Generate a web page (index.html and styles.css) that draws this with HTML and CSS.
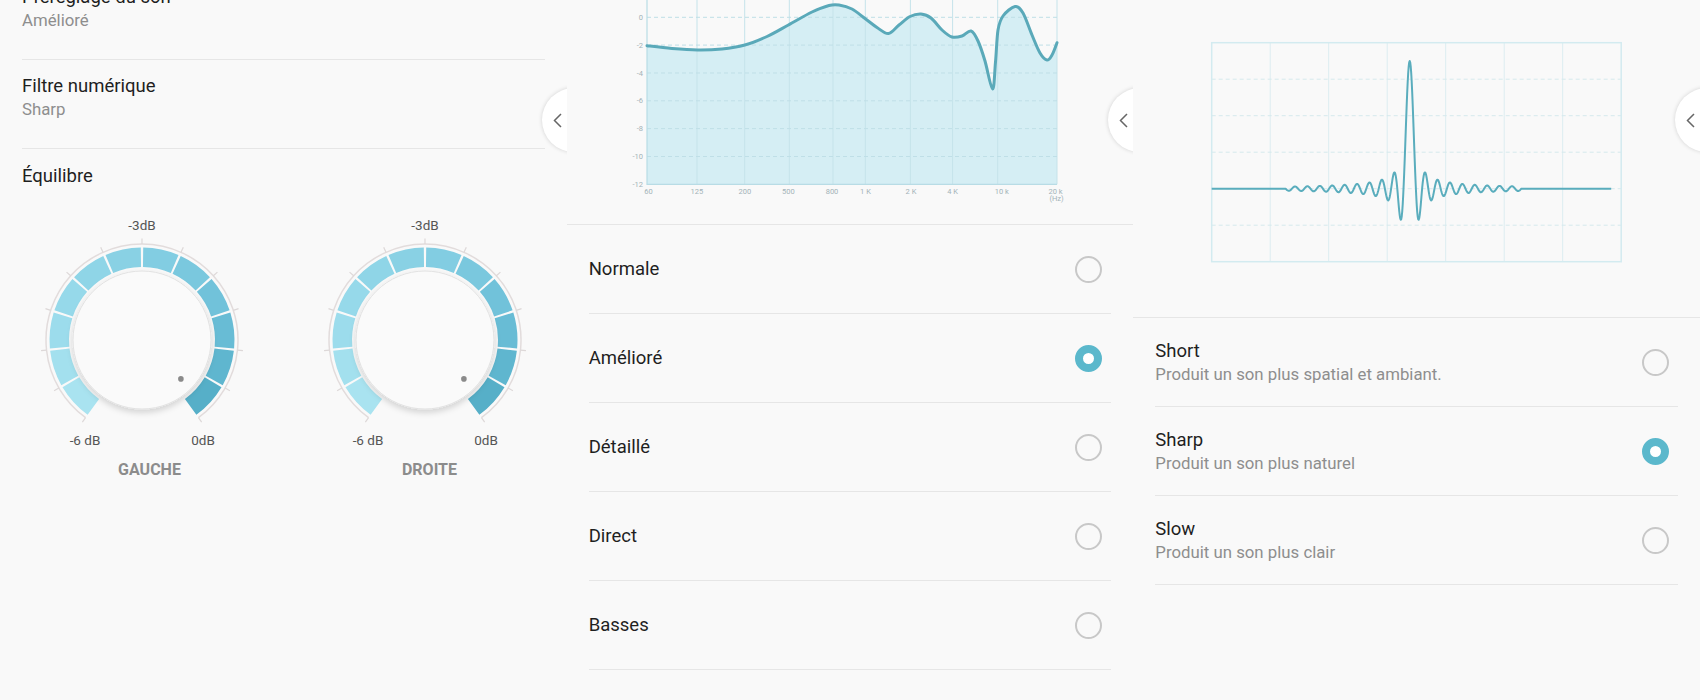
FILE: index.html
```html
<!DOCTYPE html>
<html lang="fr">
<head>
    <meta charset="UTF-8">
    <meta name="viewport" content="width=device-width, initial-scale=1.0">
    <title>Qualité audio et effets</title>
    <link rel="stylesheet" href="styles.css">
</head>
<body>
<div class="screens">

    <!-- Ecran 1 : réglages -->
    <section class="panel">
        <div class="settings">
            <div class="setting">
                <div class="setting-title">Préréglage du son</div>
                <div class="setting-value">Amélioré</div>
            </div>
            <div class="setting">
                <div class="setting-title">Filtre numérique</div>
                <div class="setting-value">Sharp</div>
            </div>
        </div>

        <div class="balance-title">Équilibre</div>
        <div class="knobs">
            <svg class="knob" viewBox="0 0 240 270" width="240" height="270">
                <defs>
                    <filter id="knobShadow" x="-30%" y="-30%" width="160%" height="170%">
                        <feDropShadow dx="0" dy="3" stdDeviation="3" flood-color="#000" flood-opacity="0.16"/>
                    </filter>
                </defs>
                <g class="knob-ring"></g>
                <circle class="knob-face" cx="120" cy="130" r="69"/>
                <circle class="knob-dot" cx="158.9" cy="168.9" r="2.8"/>
                <text class="knob-label" x="120" y="15">-3dB</text>
                <text class="knob-label" x="63" y="230">-6 dB</text>
                <text class="knob-label" x="181" y="230">0dB</text>
                <text class="knob-name" x="127.5" y="259">GAUCHE</text>
            </svg>
            <svg class="knob" viewBox="0 0 240 270" width="240" height="270">
                <g class="knob-ring"></g>
                <circle class="knob-face" cx="120" cy="130" r="69"/>
                <circle class="knob-dot" cx="158.9" cy="168.9" r="2.8"/>
                <text class="knob-label" x="120" y="15">-3dB</text>
                <text class="knob-label" x="63" y="230">-6 dB</text>
                <text class="knob-label" x="181" y="230">0dB</text>
                <text class="knob-name" x="124.5" y="259">DROITE</text>
            </svg>
        </div>

        <div class="edge-handle">
            <svg viewBox="0 0 9 15" width="9" height="15"><path d="M8 1 L1.5 7.5 L8 14"/></svg>
        </div>
    </section>

    <!-- Ecran 2 : préréglage du son -->
    <section class="panel">
        <div class="chart-area">
            <svg class="eq-chart" viewBox="0 0 567 224" width="567" height="224">
                <path class="eq-fill" id="eqFill"/>
                <g class="eq-grid">
                    <line x1="130" y1="0" x2="130" y2="184.3"/>
                    <line x1="177.7" y1="0" x2="177.7" y2="184.3"/>
                    <line x1="222.3" y1="0" x2="222.3" y2="184.3"/>
                    <line x1="266" y1="0" x2="266" y2="184.3"/>
                    <line x1="298.3" y1="0" x2="298.3" y2="184.3"/>
                    <line x1="343.4" y1="0" x2="343.4" y2="184.3"/>
                    <line x1="385.6" y1="0" x2="385.6" y2="184.3"/>
                    <line x1="430.7" y1="0" x2="430.7" y2="184.3"/>
                    <line x1="490" y1="0" x2="490" y2="184.3"/>
                </g>
                <g class="eq-grid dashed">
                    <line x1="80" y1="17.3" x2="490" y2="17.3"/>
                    <line x1="80" y1="45.1" x2="490" y2="45.1"/>
                    <line x1="80" y1="73" x2="490" y2="73"/>
                    <line x1="80" y1="100.8" x2="490" y2="100.8"/>
                    <line x1="80" y1="128.6" x2="490" y2="128.6"/>
                    <line x1="80" y1="156.5" x2="490" y2="156.5"/>
                </g>
                <path class="eq-axis" d="M80 0 V184.3 H490"/>
                <path class="eq-line" id="eqLine"/>
                <g class="eq-label y-axis">
                    <text x="76" y="19.8">0</text>
                    <text x="76" y="47.6">-2</text>
                    <text x="76" y="75.5">-4</text>
                    <text x="76" y="103.3">-6</text>
                    <text x="76" y="131.1">-8</text>
                    <text x="76" y="159">-10</text>
                    <text x="76" y="186.8">-12</text>
                </g>
                <g class="eq-label x-axis">
                    <text x="81.5" y="194">60</text>
                    <text x="129.8" y="194">125</text>
                    <text x="177.8" y="194">200</text>
                    <text x="221.4" y="194">500</text>
                    <text x="265" y="194">800</text>
                    <text x="298.5" y="194">1 K</text>
                    <text x="344" y="194">2 K</text>
                    <text x="385.7" y="194">4 K</text>
                    <text x="434.8" y="194">10 k</text>
                    <text x="488.6" y="194">20 k</text>
                    <text x="489.5" y="200.5">(Hz)</text>
                </g>
            </svg>
        </div>

        <div class="option-list">
            <div class="option">
                <div class="option-title">Normale</div>
                <span class="radio"></span>
            </div>
            <div class="option">
                <div class="option-title">Amélioré</div>
                <span class="radio checked"></span>
            </div>
            <div class="option">
                <div class="option-title">Détaillé</div>
                <span class="radio"></span>
            </div>
            <div class="option">
                <div class="option-title">Direct</div>
                <span class="radio"></span>
            </div>
            <div class="option">
                <div class="option-title">Basses</div>
                <span class="radio"></span>
            </div>
        </div>

        <div class="edge-handle">
            <svg viewBox="0 0 9 15" width="9" height="15"><path d="M8 1 L1.5 7.5 L8 14"/></svg>
        </div>
    </section>

    <!-- Ecran 3 : filtre numérique -->
    <section class="panel">
        <div class="filter-area">
            <svg class="filter-chart" viewBox="0 0 567 317" width="567" height="317">
                <g class="filter-grid" id="filterGrid"></g>
                <rect class="filter-box" x="78.7" y="42.7" width="409.5" height="219"/>
                <path class="filter-wave" id="filterWave"/>
            </svg>
        </div>

        <div class="option-list">
            <div class="option">
                <div class="option-text">
                    <div class="option-title">Short</div>
                    <div class="option-desc">Produit un son plus spatial et ambiant.</div>
                </div>
                <span class="radio"></span>
            </div>
            <div class="option">
                <div class="option-text">
                    <div class="option-title">Sharp</div>
                    <div class="option-desc">Produit un son plus naturel</div>
                </div>
                <span class="radio checked"></span>
            </div>
            <div class="option">
                <div class="option-text">
                    <div class="option-title">Slow</div>
                    <div class="option-desc">Produit un son plus clair</div>
                </div>
                <span class="radio"></span>
            </div>
        </div>

        <div class="edge-handle">
            <svg viewBox="0 0 9 15" width="9" height="15"><path d="M8 1 L1.5 7.5 L8 14"/></svg>
        </div>
    </section>

</div>

<script>
    // Point on a circle, angle in degrees (0 = right, 90 = top)
    function polar(cx, cy, r, deg) {
        const a = deg * Math.PI / 180;
        return [(cx + r * Math.cos(a)).toFixed(2), (cy - r * Math.sin(a)).toFixed(2)];
    }

    // Catmull-Rom points -> smooth cubic path
    function smoothPath(pts) {
        let d = 'M' + pts[0][0] + ' ' + pts[0][1];
        for (let i = 0; i < pts.length - 1; i++) {
            const p0 = pts[i - 1] || pts[i], p1 = pts[i], p2 = pts[i + 1], p3 = pts[i + 2] || p2;
            const c1x = p1[0] + (p2[0] - p0[0]) / 6, c1y = p1[1] + (p2[1] - p0[1]) / 6;
            const c2x = p2[0] - (p3[0] - p1[0]) / 6, c2y = p2[1] - (p3[1] - p1[1]) / 6;
            d += ` C${c1x.toFixed(1)} ${c1y.toFixed(1)} ${c2x.toFixed(1)} ${c2y.toFixed(1)} ${p2[0]} ${p2[1]}`;
        }
        return d;
    }

    // Balance knobs: 12 segments from -6 dB to 0 dB
    const segColors = ['#a9e3f0', '#a3e0ee', '#9cdcec', '#96d9ea', '#8fd5e7', '#89d1e4',
                       '#82cde2', '#7ac8de', '#71c2da', '#68bcd5', '#5fb6cf', '#56afc8'];
    const cx = 120, cy = 130, start = 234, step = 24;

    document.querySelectorAll('.knob-ring').forEach(ring => {
        let html = '';
        const a = polar(cx, cy, 96, start), b = polar(cx, cy, 96, start - 12 * step);
        html += `<path class="knob-track" d="M${a[0]} ${a[1]} A96 96 0 1 1 ${b[0]} ${b[1]}"/>`;

        for (let i = 0; i <= 12; i++) {
            const p = polar(cx, cy, 96, start - i * step), q = polar(cx, cy, 101.5, start - i * step);
            html += `<line class="knob-tick" x1="${p[0]}" y1="${p[1]}" x2="${q[0]}" y2="${q[1]}"/>`;
        }

        for (let i = 0; i < 12; i++) {
            const a1 = start - i * step - (i === 0 ? 0 : 0.75);
            const a2 = start - (i + 1) * step + (i === 11 ? 0 : 0.75);
            const o1 = polar(cx, cy, 92.5, a1), o2 = polar(cx, cy, 92.5, a2);
            const n1 = polar(cx, cy, 73, a1), n2 = polar(cx, cy, 73, a2);
            html += `<path fill="${segColors[i]}" d="M${o1[0]} ${o1[1]} A92.5 92.5 0 0 1 ${o2[0]} ${o2[1]} L${n2[0]} ${n2[1]} A73 73 0 0 0 ${n1[0]} ${n1[1]} Z"/>`;
        }
        ring.innerHTML = html;
    });

    // Equalizer response curve
    const eqPoints = [
        [80, 45.7], [105, 48.5], [130.5, 50], [155, 49], [177.8, 45], [200, 36.5], [221.4, 25],
        [245, 12], [262, 5.5], [272, 5], [285, 9], [298, 18.5], [310, 27.5], [321.4, 33.5],
        [332, 25], [343, 16.5], [354, 14], [364, 18], [375, 30], [385, 37], [395, 36], [404, 31],
        [411, 41], [418, 61], [425.5, 89], [428.5, 62], [431, 30], [436, 16], [448, 6.5],
        [456, 13], [465, 35], [473, 53], [480, 60], [485, 55], [490, 42.7]
    ];
    const eqLine = smoothPath(eqPoints);
    document.getElementById('eqLine').setAttribute('d', eqLine);
    document.getElementById('eqFill').setAttribute('d', eqLine + ' L490 184.3 L80 184.3 Z');

    // Digital filter impulse response grid
    let grid = '';
    for (let k = 1; k < 7; k++) {
        const x = (78.7 + k * 58.5).toFixed(1);
        grid += `<line x1="${x}" y1="42.7" x2="${x}" y2="261.7"/>`;
    }
    for (let k = 1; k < 6; k++) {
        const y = (42.7 + k * 36.5).toFixed(1);
        grid += `<line class="dashed" x1="78.7" y1="${y}" x2="488.2" y2="${y}"/>`;
    }
    document.getElementById('filterGrid').innerHTML = grid;

    // Impulse response (sinc), side lobes slightly deepened
    const base = 188.7, peakX = 276.7, unit = 6.2, amp = 127.7;
    let wave = '';
    for (let x = 78.7; x <= 478.3; x += 0.5) {
        const t = (x - peakX) / unit;
        let v = 0;
        if (t > -20 && t < 18) v = Math.abs(t) < 1e-6 ? 1 : Math.sin(Math.PI * t) / (Math.PI * t);
        if (v < 0 && Math.abs(t) < 2) v *= 1.12;
        wave += (wave ? ' L' : 'M') + x.toFixed(1) + ' ' + (base - amp * v).toFixed(2);
    }
    document.getElementById('filterWave').setAttribute('d', wave);
</script>
</body>
</html>
```

FILE: styles.css
```css
/* General page */
body {
    margin: 0;
    padding: 0;
    background-color: #f9f9f9;
    font-family: Roboto, "Noto Sans", Arial, sans-serif;
    color: #222;
}

.screens {
    display: grid;
    grid-template-columns: repeat(3, 1fr);
    height: 700px;
    overflow: hidden;
}

.panel {
    position: relative;
    overflow: hidden;
}

/* Edge panel handle */
.edge-handle {
    position: absolute;
    top: 88px;
    right: -39px;
    width: 64px;
    height: 64px;
    border-radius: 50%;
    background-color: #fff;
    box-shadow: 0 0 4px rgba(0, 0, 0, 0.16);
}

.edge-handle svg {
    position: absolute;
    left: 11px;
    top: 25px;
}

.edge-handle path {
    fill: none;
    stroke: #666;
    stroke-width: 1.5;
}

/* Settings list (screen 1) */
.settings {
    margin-top: -29px;
}

.setting {
    margin: 0 22px;
    padding: 14px 0 28px;
    border-bottom: 1px solid #e6e6e6;
}

.setting-title,
.balance-title,
.option-title {
    font-size: 18.5px;
    line-height: 24px;
    color: #1f1f1f;
}

.setting-value,
.option-desc {
    font-size: 16.8px;
    line-height: 22px;
    color: #8e8e8e;
}

.balance-title {
    margin: 0 22px;
    padding-top: 15px;
}

/* Balance knobs */
.knobs {
    display: flex;
    gap: 43px;
    padding-left: 22px;
    margin-top: 22px;
}

.knob {
    display: block;
}

.knob-track {
    fill: none;
    stroke: #e2dcdc;
    stroke-width: 1.5;
}

.knob-tick {
    stroke: #ddd8d8;
    stroke-width: 1.2;
}

.knob-face {
    fill: #fafafa;
    stroke: #e2e2e2;
    stroke-width: 1;
    filter: url(#knobShadow);
}

.knob-dot {
    fill: #8a8a8a;
}

.knob-label {
    font-size: 13.5px;
    fill: #555;
    text-anchor: middle;
    dominant-baseline: central;
}

.knob-name {
    font-size: 16px;
    font-weight: bold;
    fill: #8c8c8c;
    text-anchor: middle;
    dominant-baseline: central;
}

/* Equalizer chart (screen 2) */
.chart-area {
    height: 224px;
    border-bottom: 1px solid #e6e6e6;
}

.eq-chart {
    display: block;
}

.eq-fill {
    fill: #d5eef4;
}

.eq-grid line {
    stroke: #c5e3ea;
    stroke-width: 1;
}

.eq-grid.dashed line {
    stroke: #bfdfe7;
    stroke-dasharray: 4 3;
}

.eq-axis {
    fill: none;
    stroke: #b8dce5;
    stroke-width: 1.2;
}

.eq-line {
    fill: none;
    stroke: #5aa9b9;
    stroke-width: 3;
    stroke-linecap: round;
}

.eq-label text {
    font-size: 7.5px;
    fill: #a3b3b8;
}

.eq-label.y-axis text {
    text-anchor: end;
}

.eq-label.x-axis text {
    text-anchor: middle;
}

/* Option lists with radio buttons */
.option {
    display: flex;
    align-items: center;
    justify-content: space-between;
    height: 88px;
    margin: 0 22px;
    padding-right: 9px;
    border-bottom: 1px solid #e6e6e6;
}

.radio {
    width: 27px;
    height: 27px;
    box-sizing: border-box;
    border: 2px solid #c8c8c8;
    border-radius: 50%;
}

.radio.checked {
    border: 8px solid #5bb8cc;
    background-color: #fff;
}

/* Digital filter chart (screen 3) */
.filter-area {
    height: 317px;
    border-bottom: 1px solid #e6e6e6;
}

.filter-chart {
    display: block;
}

.filter-box {
    fill: none;
    stroke: #d3ebf0;
    stroke-width: 1.5;
}

.filter-grid line {
    stroke: #dcedf1;
    stroke-width: 1;
}

.filter-grid line.dashed {
    stroke: #d6e9ed;
    stroke-dasharray: 4 3;
}

.filter-wave {
    fill: none;
    stroke: #5aadbd;
    stroke-width: 2;
    stroke-linejoin: round;
}
```
